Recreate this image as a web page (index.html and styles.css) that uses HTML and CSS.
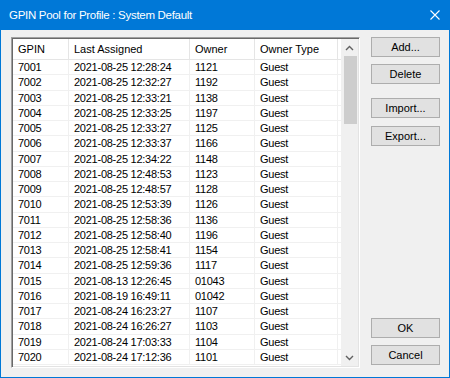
FILE: index.html
```html
<!DOCTYPE html>
<html lang="en">
<head>
    <meta charset="UTF-8">
    <title>GPIN Pool for Profile : System Default</title>
    <link rel="stylesheet" href="styles.css">
</head>
<body>
    <div class="dialog">
        <div class="titlebar">
            <span class="title">GPIN Pool for Profile : System Default</span>
            <svg class="close" width="10" height="10" viewBox="0 0 10 10">
                <path d="M0.5 0.5 L9.5 9.5 M9.5 0.5 L0.5 9.5" stroke="#fff" stroke-width="1.1" fill="none"/>
            </svg>
        </div>
        <div class="content">
            <div class="listview">
                <div class="grid">
                    <div class="row head">
                        <div class="cell">GPIN</div>
                        <div class="cell">Last Assigned</div>
                        <div class="cell">Owner</div>
                        <div class="cell">Owner Type</div>
                        <div class="cell"></div>
                    </div>
                    <div class="row"><div class="cell">7001</div><div class="cell">2021-08-25 12:28:24</div><div class="cell">1121</div><div class="cell">Guest</div><div class="cell"></div></div>
                    <div class="row"><div class="cell">7002</div><div class="cell">2021-08-25 12:32:27</div><div class="cell">1192</div><div class="cell">Guest</div><div class="cell"></div></div>
                    <div class="row"><div class="cell">7003</div><div class="cell">2021-08-25 12:33:21</div><div class="cell">1138</div><div class="cell">Guest</div><div class="cell"></div></div>
                    <div class="row"><div class="cell">7004</div><div class="cell">2021-08-25 12:33:25</div><div class="cell">1197</div><div class="cell">Guest</div><div class="cell"></div></div>
                    <div class="row"><div class="cell">7005</div><div class="cell">2021-08-25 12:33:27</div><div class="cell">1125</div><div class="cell">Guest</div><div class="cell"></div></div>
                    <div class="row"><div class="cell">7006</div><div class="cell">2021-08-25 12:33:37</div><div class="cell">1166</div><div class="cell">Guest</div><div class="cell"></div></div>
                    <div class="row"><div class="cell">7007</div><div class="cell">2021-08-25 12:34:22</div><div class="cell">1148</div><div class="cell">Guest</div><div class="cell"></div></div>
                    <div class="row"><div class="cell">7008</div><div class="cell">2021-08-25 12:48:53</div><div class="cell">1123</div><div class="cell">Guest</div><div class="cell"></div></div>
                    <div class="row"><div class="cell">7009</div><div class="cell">2021-08-25 12:48:57</div><div class="cell">1128</div><div class="cell">Guest</div><div class="cell"></div></div>
                    <div class="row"><div class="cell">7010</div><div class="cell">2021-08-25 12:53:39</div><div class="cell">1126</div><div class="cell">Guest</div><div class="cell"></div></div>
                    <div class="row"><div class="cell">7011</div><div class="cell">2021-08-25 12:58:36</div><div class="cell">1136</div><div class="cell">Guest</div><div class="cell"></div></div>
                    <div class="row"><div class="cell">7012</div><div class="cell">2021-08-25 12:58:40</div><div class="cell">1196</div><div class="cell">Guest</div><div class="cell"></div></div>
                    <div class="row"><div class="cell">7013</div><div class="cell">2021-08-25 12:58:41</div><div class="cell">1154</div><div class="cell">Guest</div><div class="cell"></div></div>
                    <div class="row"><div class="cell">7014</div><div class="cell">2021-08-25 12:59:36</div><div class="cell">1117</div><div class="cell">Guest</div><div class="cell"></div></div>
                    <div class="row"><div class="cell">7015</div><div class="cell">2021-08-13 12:26:45</div><div class="cell">01043</div><div class="cell">Guest</div><div class="cell"></div></div>
                    <div class="row"><div class="cell">7016</div><div class="cell">2021-08-19 16:49:11</div><div class="cell">01042</div><div class="cell">Guest</div><div class="cell"></div></div>
                    <div class="row"><div class="cell">7017</div><div class="cell">2021-08-24 16:23:27</div><div class="cell">1107</div><div class="cell">Guest</div><div class="cell"></div></div>
                    <div class="row"><div class="cell">7018</div><div class="cell">2021-08-24 16:26:27</div><div class="cell">1103</div><div class="cell">Guest</div><div class="cell"></div></div>
                    <div class="row"><div class="cell">7019</div><div class="cell">2021-08-24 17:03:33</div><div class="cell">1104</div><div class="cell">Guest</div><div class="cell"></div></div>
                    <div class="row"><div class="cell">7020</div><div class="cell">2021-08-24 17:12:36</div><div class="cell">1101</div><div class="cell">Guest</div><div class="cell"></div></div>
                </div>
                <div class="scrollbar">
                    <div class="arrow">
                        <svg width="9" height="6" viewBox="0 0 9 6"><path d="M1 5 L4.5 1.5 L8 5" stroke="#606060" stroke-width="1.4" fill="none"/></svg>
                    </div>
                    <div class="thumb"></div>
                    <div class="track"></div>
                    <div class="arrow">
                        <svg width="9" height="6" viewBox="0 0 9 6"><path d="M1 1 L4.5 4.5 L8 1" stroke="#606060" stroke-width="1.4" fill="none"/></svg>
                    </div>
                </div>
            </div>
            <div class="buttons">
                <button class="btn">Add...</button>
                <button class="btn">Delete</button>
                <button class="btn gap">Import...</button>
                <button class="btn">Export...</button>
                <button class="btn ok">OK</button>
                <button class="btn">Cancel</button>
            </div>
        </div>
    </div>
</body>
</html>
```

FILE: styles.css
```css
* {
    box-sizing: border-box;
}

body {
    margin: 0;
    font-family: "Liberation Sans", Arial, sans-serif;
    font-size: 11px;
    color: #000;
}

.dialog {
    width: 450px;
    height: 378px;
    background-color: #f0f0f0;
    border: 1px solid #0078d7;
    border-top: none;
    display: flex;
    flex-direction: column;
}

.titlebar {
    height: 30px;
    margin: 0 -1px;
    background-color: #0078d7;
    color: #fff;
    display: flex;
    align-items: center;
    justify-content: space-between;
    padding: 0 9px 1px 9px;
}

.title {
    font-size: 11.5px;
    letter-spacing: -0.3px;
}

.close {
    margin-right: 1px;
}

.content {
    flex: 1;
    display: flex;
    padding: 7px 9px 9px 10px;
}

/* list view with sunken border */
.listview {
    width: 349px;
    display: flex;
    border: 1px solid;
    border-color: #a0a0a0 #ffffff #ffffff #a0a0a0;
    box-shadow: inset 1px 1px 0 #696969, inset -1px -1px 0 #e3e3e3;
    padding: 1px;
    background-color: #fff;
}

.grid {
    flex: 1;
    overflow: hidden;
}

.row {
    display: grid;
    grid-template-columns: 56px 121px 65px 83px 1fr;
    height: 15.25px;
    border-bottom: 1px solid #f0f0f0;
}

.row .cell {
    padding-left: 5px;
    border-right: 1px solid #f0f0f0;
    line-height: 14px;
    white-space: nowrap;
    letter-spacing: -0.25px;
}

.row .cell:last-child {
    border-right: none;
}

.row.head {
    height: 21px;
    border-bottom: 1px solid #e5e5e5;
}

.row.head .cell {
    line-height: 20px;
    border-right-color: #e5e5e5;
    letter-spacing: 0;
}

/* scrollbar */
.scrollbar {
    width: 17px;
    display: flex;
    flex-direction: column;
    background-color: #f0f0f0;
}

.arrow {
    height: 17px;
    display: flex;
    align-items: center;
    justify-content: center;
}

.thumb {
    height: 68px;
    margin: 0 1px 0 3px;
    background-color: #cdcdcd;
}

.track {
    flex: 1;
}

/* buttons */
.buttons {
    margin-left: 11px;
    width: 69px;
    display: flex;
    flex-direction: column;
}

.btn {
    height: 20px;
    margin-bottom: 7px;
    background-color: #e1e1e1;
    border: 1px solid #adadad;
    font-family: "Liberation Sans", Arial, sans-serif;
    font-size: 11px;
    color: #000;
    padding: 0;
}

.btn:last-child {
    margin-bottom: 3px;
}

.btn.gap {
    margin-top: 7px;
    margin-bottom: 8px;
}

.btn.ok {
    margin-top: auto;
}
```
